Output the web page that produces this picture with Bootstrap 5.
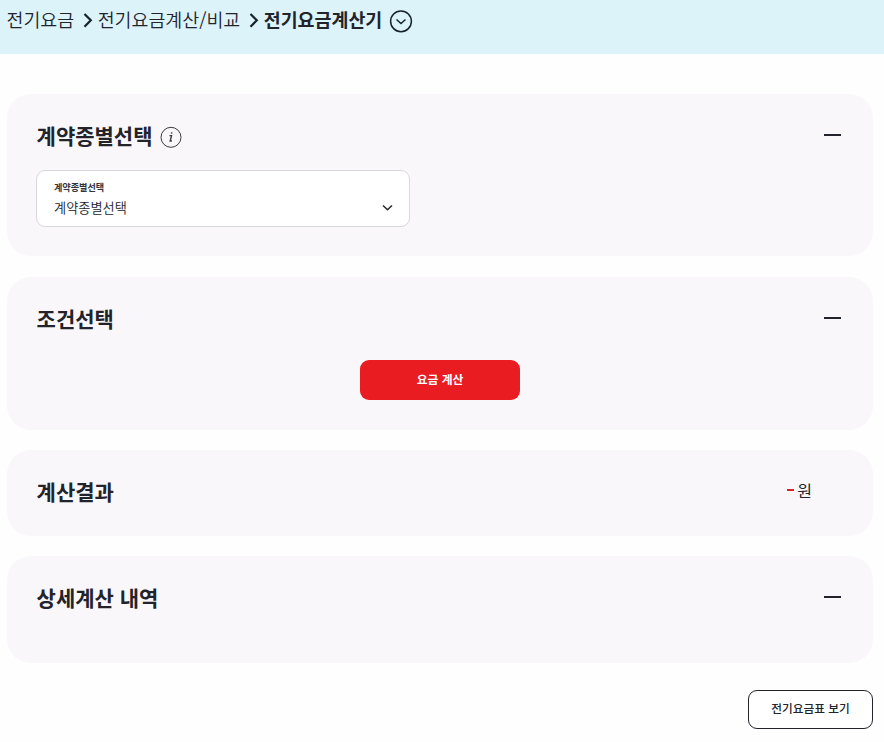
<!DOCTYPE html>
<html lang="ko">
<head>
<meta charset="utf-8">
<meta name="viewport" content="width=device-width, initial-scale=1">
<title>전기요금계산기</title>
<link href="https://cdn.jsdelivr.net/npm/bootstrap@5.3.0/dist/css/bootstrap.min.css" rel="stylesheet">
<style>
body{font-family:"Noto Sans CJK KR",sans-serif;color:#22232b;background:#fefefe;height:742px;overflow:hidden}
svg{display:block;flex:none}
.crumbs{height:54px;background:#dcf3fa;padding:4px 0 0 6.5px;font-size:18.4px;line-height:30px;font-weight:350}
.crumbs a{color:inherit}
.crumbs strong{font-weight:700}
.sep{margin:9px 5px 0 8.5px}
.more{margin:5px 0 0 7px}
.content{padding:40px 11px 0 7px}
.panel{background:#f9f7fa;border-radius:24px;padding:0 32px 0 29px}
.p1{height:162px;margin-bottom:21px}
.p2{height:153px;margin-bottom:20px}
.p3{height:86px;margin-bottom:20px}
.p4{height:107px;margin-bottom:27px}
.panel h2{font-size:21px;line-height:30px;font-weight:700;margin:0;padding-left:.6px}
.head{padding-top:26px}
.toggle{width:17px;height:2px;background:#22232b;border:0;padding:0;margin-bottom:1px}
.info{margin:3px 0 0 -1px}
.picker{width:374px;height:57px;background:#fff;border:1px solid #d9d8de;border-radius:9px;margin-top:20px;padding:8px 16px 0 17px}
.picker .cap{font-size:9.1px;line-height:17px;font-weight:700;color:#33343c}
.picker .val{font-size:13.2px;line-height:23px;font-weight:350}
.picker svg{margin-top:25px}
.calc{width:160px;height:40px;background:#e91c21!important;border:0;border-radius:9px;font-size:11.8px;line-height:36px;font-weight:700;color:#fff!important;padding:0 0 2px;margin:27px 0 0 3px}
.won{font-size:16px;line-height:26px;margin:-3px 29px 0 0}
.dash{width:7px;height:2px;background:#d8232e;margin-right:3px}
.rates{width:125px;height:39px;border:1px solid #22232b;border-radius:9px;background:#fff;font-size:11.7px;line-height:32px;font-weight:500;padding:0 0 4px;color:#22232b}
</style>
</head>
<body>
<nav class="crumbs d-flex">
  <a class="text-decoration-none" href="#">전기요금</a>
  <svg class="sep" width="10" height="15" viewBox="0 0 10 15" fill="none" stroke="#17232b" stroke-width="2.2"><path d="M1.5 .9 7.8 7.3 1.5 13.7"/></svg>
  <a class="text-decoration-none" href="#">전기요금계산/비교</a>
  <svg class="sep" width="10" height="15" viewBox="0 0 10 15" fill="none" stroke="#17232b" stroke-width="2.2"><path d="M1.5 .9 7.8 7.3 1.5 13.7"/></svg>
  <strong>전기요금계산기</strong>
  <svg class="more" width="24" height="24" viewBox="0 0 24 24" fill="none" stroke="#17232b" stroke-width="1.5"><circle cx="12" cy="12.3" r="10.4"/><path d="m7.5 10.5 4.5 4 4.5-4"/></svg>
</nav>
<main class="content">
  <section class="panel p1">
    <div class="head d-flex justify-content-between align-items-center">
      <div class="d-flex align-items-center gap-2"><h2>계약종별선택</h2>
        <svg class="info" width="22" height="22" viewBox="0 0 22 22" fill="none" stroke="#3c3c44" stroke-width="1"><circle cx="11" cy="11.3" r="10"/><path d="M9.5 9.6h2l-1.3 5.4h1.7" stroke-width="1.4"/><path d="m11.8 6.3-.3 1.4" stroke-width="1.6"/></svg></div>
      <button class="toggle" type="button" aria-label="접기"></button>
    </div>
    <div class="picker d-flex justify-content-between">
      <div><div class="cap">계약종별선택</div><div class="val">계약종별선택</div></div>
      <svg width="11" height="8" viewBox="0 0 11 8" fill="none" stroke="#26262e" stroke-width="1.5"><path d="m1 1.5 4.5 4.2L10 1.5"/></svg>
    </div>
  </section>
  <section class="panel p2">
    <div class="head d-flex justify-content-between align-items-center"><h2>조건선택</h2><button class="toggle" type="button" aria-label="접기"></button></div>
    <div class="d-flex justify-content-center"><button class="btn calc" type="button">요금 계산</button></div>
  </section>
  <section class="panel p3">
    <div class="head d-flex justify-content-between align-items-center"><h2>계산결과</h2>
      <div class="won d-flex align-items-center"><span class="dash"></span>원</div></div>
  </section>
  <section class="panel p4">
    <div class="head d-flex justify-content-between align-items-center"><h2>상세계산 내역</h2><button class="toggle" type="button" aria-label="접기"></button></div>
  </section>
  <div class="d-flex justify-content-end"><button class="btn rates" type="button">전기요금표 보기</button></div>
</main>
<script src="https://cdn.jsdelivr.net/npm/bootstrap@5.3.0/dist/js/bootstrap.bundle.min.js"></script>
</body>
</html>
